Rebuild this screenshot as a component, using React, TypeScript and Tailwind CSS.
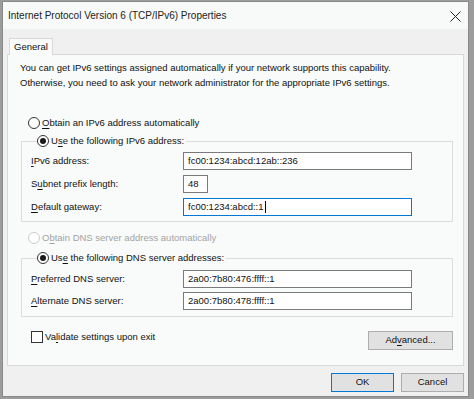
import React from 'react';

const font = { fontFamily: '"Liberation Sans", Arial, sans-serif' };

const Radio: React.FC<{ checked?: boolean; disabled?: boolean }> = ({ checked, disabled }) => (
  <span
    className={`flex items-center justify-center w-[12px] h-[12px] rounded-full border bg-white shrink-0 ${
      disabled ? 'border-[#cccccc]' : 'border-[#333333]'
    }`}
  >
    {checked && <span className="w-[6px] h-[6px] rounded-full bg-[#1a1a1a]" />}
  </span>
);

const Field: React.FC<{ label: React.ReactNode; value: string; width?: string; focused?: boolean; caret?: boolean }> = ({
  label,
  value,
  width = 'w-[229px]',
  focused,
  caret,
}) => (
  <div className="flex items-center h-[18px]">
    <span className="w-[152px] shrink-0">{label}</span>
    <div
      className={`${width} h-[18px] bg-white border flex items-center px-[4px] ${
        focused ? 'border-[#0078d7]' : 'border-[#7a7a7a]'
      }`}
    >
      <span>{value}</span>
      {caret && <span className="w-px h-[12px] bg-black ml-[1px]" />}
    </div>
  </div>
);

const U: React.FC<{ children: React.ReactNode }> = ({ children }) => <span className="underline underline-offset-2">{children}</span>;

export default function App() {
  return (
    <div className="w-[474px] h-[399px] bg-[#9c9c9c] pl-[2px] pt-[1px] overflow-hidden" style={font}>
      <div className="w-[467px] h-[396px] border border-[#8a8a8a] bg-[#f0f0f0] flex flex-col text-[9.5px] text-[#111111]">
        {/* title bar */}
        <div className="h-[27px] bg-[#f7faf8] flex items-center justify-between pl-[5px] pr-[7px] shrink-0">
          <span className="text-[10px] text-[#222222]">Internet Protocol Version 6 (TCP/IPv6) Properties</span>
          <svg width="11" height="11" viewBox="0 0 11 11" className="mt-[1px]">
            <path d="M0.5 0.5 L10.5 10.5 M10.5 0.5 L0.5 10.5" stroke="#222" strokeWidth="1" />
          </svg>
        </div>

        <div className="px-[4px] pt-[8px] flex flex-col">
          {/* tab */}
          <div className="flex pl-[2px]">
            <div className="w-[44px] h-[17px] bg-[#f8fbf9] border border-b-0 border-[#d9d9d9] flex items-center justify-center relative top-[1px]">
              General
            </div>
          </div>

          {/* panel */}
          <div className="h-[312px] border border-[#d9d9d9] bg-[#f8fbf9] flex flex-col">
            <p className="pl-[12px] pt-[5px] leading-[15px]">
              You can get IPv6 settings assigned automatically if your network supports this capability.
              <br />
              Otherwise, you need to ask your network administrator for the appropriate IPv6 settings.
            </p>

            <div className="flex items-center gap-[2px] h-[14px] pl-[20px] mt-[26px]">
              <Radio />
              <span>
                <U>O</U>btain an IPv6 address automatically
              </span>
            </div>

            <fieldset className="ml-[13px] mr-[10px] mt-[4px] border border-[#dcdcdc] pl-[9px] pb-[5px] flex flex-col gap-[5px]">
              <legend className="ml-[6px] pr-[2px] flex items-center gap-[2px] h-[14px]">
                <Radio checked />
                <span>
                  U<U>s</U>e the following IPv6 address:
                </span>
              </legend>
              <div className="-mt-[1px]" />
              <Field
                label={
                  <>
                    <U>I</U>Pv6 address:
                  </>
                }
                value="fc00:1234:abcd:12ab::236"
              />
              <Field
                label={
                  <>
                    S<U>u</U>bnet prefix length:
                  </>
                }
                value="48"
                width="w-[25px]"
              />
              <Field
                label={
                  <>
                    <U>D</U>efault gateway:
                  </>
                }
                value="fc00:1234:abcd::1"
                focused
                caret
              />
            </fieldset>

            <div className="flex items-center gap-[2px] h-[14px] pl-[20px] mt-[9px] text-[#a3a3a3]">
              <Radio disabled />
              <span>
                O<U>b</U>tain DNS server address automatically
              </span>
            </div>

            <fieldset className="ml-[13px] mr-[10px] mt-[6px] border border-[#dcdcdc] pl-[9px] pb-[6px] flex flex-col gap-[4px]">
              <legend className="ml-[6px] pr-[2px] flex items-center gap-[2px] h-[14px]">
                <Radio checked />
                <span>
                  Us<U>e</U> the following DNS server addresses:
                </span>
              </legend>
              <div className="mt-[1px]" />
              <Field
                label={
                  <>
                    <U>P</U>referred DNS server:
                  </>
                }
                value="2a00:7b80:476:ffff::1"
              />
              <Field
                label={
                  <>
                    <U>A</U>lternate DNS server:
                  </>
                }
                value="2a00:7b80:478:ffff::1"
              />
            </fieldset>

            <div className="flex items-start justify-between pl-[23px] pr-[10px] mt-[14px]">
              <div className="flex items-center gap-[2px] h-[12px]">
                <span className="w-[12px] h-[12px] border border-[#333333] bg-white" />
                <span>
                  Va<U>l</U>idate settings upon exit
                </span>
              </div>
              <button className="w-[85px] h-[19px] bg-[#e1e1e1] border border-[#adadad] flex items-center justify-center">
                <span>
                  Ad<U>v</U>anced...
                </span>
              </button>
            </div>
          </div>

          {/* footer */}
          <div className="flex justify-end gap-[7px] mt-[7px]">
            <button className="w-[63px] h-[19px] bg-[#e1e1e1] border border-[#0078d7] flex items-center justify-center">
              OK
            </button>
            <button className="w-[63px] h-[19px] bg-[#e1e1e1] border border-[#adadad] flex items-center justify-center">
              Cancel
            </button>
          </div>
        </div>
      </div>
    </div>
  );
}
